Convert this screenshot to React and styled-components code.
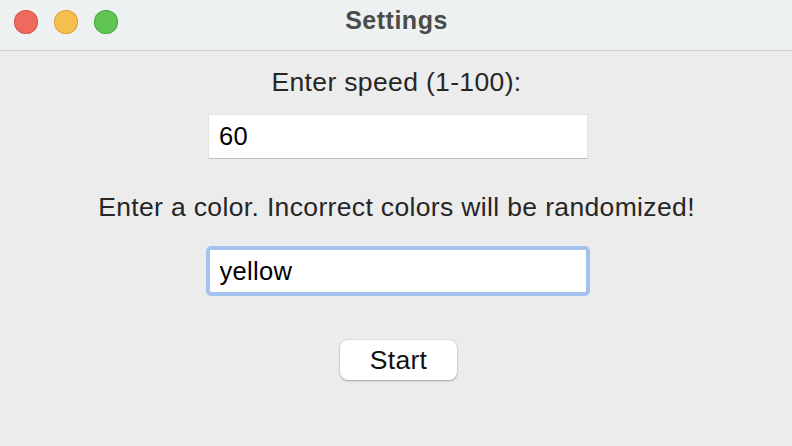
import React from 'react'
import styled, { createGlobalStyle } from 'styled-components'

const Global = createGlobalStyle`
  html, body { margin: 0; padding: 0; background: #ececec; }
  body { font-family: "Liberation Sans", Arial, sans-serif; }
`

function App() {
    return (
        <Window>
            <Global />
            <TitleBar>
                <Lights>
                    <Light color="#ee6a5f" edge="#d8574c" />
                    <Light color="#f5bf4f" edge="#dea43a" />
                    <Light color="#61c554" edge="#4ead41" />
                </Lights>
                <Title>Settings</Title>
            </TitleBar>
            <Body>
                <Label>Enter speed (1-100):</Label>
                <Field defaultValue="60" />
                <Label top="33px">Enter a color. Incorrect colors will be randomized!</Label>
                <FocusRing>
                    <Field defaultValue="yellow" focused />
                </FocusRing>
                <Button>Start</Button>
            </Body>
        </Window>
    )
}

export default App

const Window = styled.div`
width:792px;
height:446px;
background:#ececec;
border-radius:0 0 10px 10px;
overflow:hidden;
display:flex;
flex-direction:column;
`
const TitleBar = styled.div`
height:50px;
background:#eef1f2;
border-bottom:1px solid #cfcfcf;
position:relative;
display:flex;
align-items:center;
justify-content:center;
flex-shrink:0;
`
const Lights = styled.div`
position:absolute;
left:14px;
top:10px;
display:flex;
gap:16px;
`
const Light = styled.span`
width:24px;
height:24px;
border-radius:50%;
background:${p => p.color};
box-shadow:inset 0 0 0 1px ${p => p.edge};
`
const Title = styled.h1`
margin:0 0 9px 1px;
font-size:25px;
letter-spacing:0.5px;
font-weight:700;
color:#4b4b4b;
`
const Body = styled.div`
display:flex;
flex-direction:column;
align-items:center;
padding-top:15px;
`
const Label = styled.p`
margin:${p => p.top || '0'} 0 0 1px;
font-size:26.5px;
letter-spacing:0.35px;
line-height:32px;
color:#262626;
`
const Field = styled.input`
margin:${p => p.focused ? '0' : '17px 0 0 4px'};
width:${p => p.focused ? '376px' : '378px'};
height:${p => p.focused ? '42px' : '43px'};
box-sizing:border-box;
border:none;
outline:none;
padding:0 10px;
background:#fff;
font-family:"Liberation Sans", Arial, sans-serif;
font-size:25.5px;
letter-spacing:0.3px;
color:#000;
box-shadow:${p => p.focused ? 'none' : '0 1px 0 #bdbdbd, 0 0 0 1px #e2e2e2'};
display:block;
`
const FocusRing = styled.div`
margin:23px 0 0 3px;
padding:4px;
border-radius:5px;
background:#a3c2ee;
`
const Button = styled.button`
margin:44px 0 0 5px;
width:117px;
height:40px;
border:none;
border-radius:8px;
background:#fff;
box-shadow:0 1px 2px rgba(0,0,0,0.28), 0 0 0 0.5px rgba(0,0,0,0.1);
font-family:"Liberation Sans", Arial, sans-serif;
font-size:26.5px;
letter-spacing:0.3px;
color:#111;
`
